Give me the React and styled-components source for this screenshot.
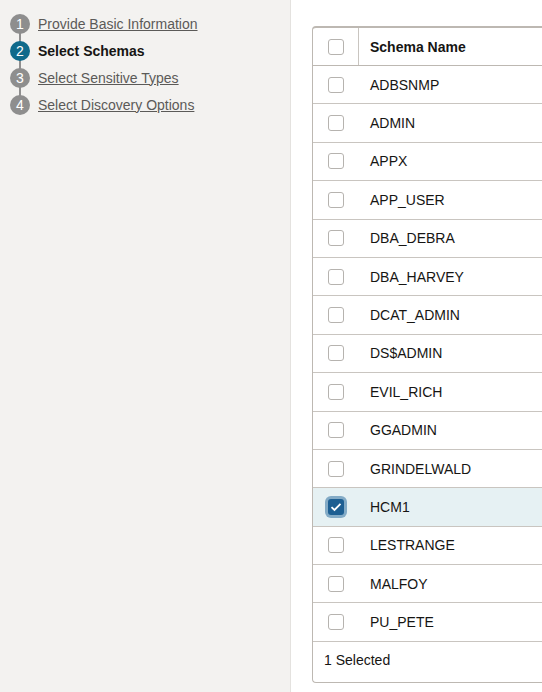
import React from "react";
import styled, { createGlobalStyle } from "styled-components";

const GlobalStyle = createGlobalStyle`
  html, body {
    margin: 0;
    padding: 0;
    background: #ffffff;
  }
  body {
    font-family: "Liberation Sans", Arial, sans-serif;
    color: #161513;
  }
`;

const Page = styled.div`
  display: flex;
  width: 542px;
  height: 692px;
  overflow: hidden;
`;

const Sidebar = styled.nav`
  width: 291px;
  flex-shrink: 0;
  background: #f3f2f0;
  border-right: 1px solid #e4e2df;
  padding-top: 10px;
  box-sizing: border-box;
`;

const StepList = styled.ol`
  list-style: none;
  margin: 0;
  padding: 0 0 0 10px;
`;

const Step = styled.li`
  position: relative;
  display: flex;
  align-items: center;
  height: 27px;
  gap: 8px;

  &:not(:last-child)::after {
    content: "";
    position: absolute;
    left: 9px;
    top: 17px;
    width: 2px;
    height: 20px;
    background: #8f8f8f;
  }
`;

const StepNumber = styled.span`
  position: relative;
  z-index: 1;
  width: 20px;
  height: 20px;
  border-radius: 50%;
  background: ${(p) => (p.$active ? "#0f6a8b" : "#8e8e8e")};
  color: #ffffff;
  font-size: 14px;
  display: flex;
  align-items: center;
  justify-content: center;
  flex-shrink: 0;
`;

const StepLabel = styled.a`
  font-size: 14px;
  color: ${(p) => (p.$active ? "#161513" : "#5b5a58")};
  font-weight: ${(p) => (p.$active ? 700 : 400)};
  text-decoration: ${(p) => (p.$active ? "none" : "underline")};
  cursor: pointer;
`;

const Main = styled.main`
  flex: 1;
  padding: 26px 0 0 21px;
  box-sizing: border-box;
  min-width: 0;
`;

const Table = styled.div`
  width: 300px;
  border: 1px solid #bdb8b2;
  border-top-width: 2px;
  border-right: none;
  border-radius: 4px 0 0 4px;
`;

const Row = styled.div`
  display: flex;
  align-items: center;
  height: 38.4px;
  box-sizing: border-box;
  border-bottom: 1px solid #c9c5c0;
  background: ${(p) => (p.$selected ? "#e6f1f3" : "transparent")};
`;

const HeaderRow = styled(Row)`
  height: 38px;
  border-bottom-color: #bdb8b2;
`;

const CheckCell = styled.div`
  width: 46px;
  align-self: stretch;
  display: flex;
  align-items: center;
  justify-content: center;
  border-right: ${(p) => (p.$divider ? "1px solid #c9c5c0" : "1px solid transparent")};
  box-sizing: border-box;
`;

const NameCell = styled.div`
  padding-left: 11px;
  font-size: 14px;
  font-weight: ${(p) => (p.$header ? 700 : 400)};
  color: #161513;
`;

const Box = styled.span`
  width: 16px;
  height: 16px;
  box-sizing: border-box;
  border-radius: 3px;
  border: 1px solid #b6b3af;
  background: #ffffff;
`;

const CheckedBox = styled.span`
  width: 16px;
  height: 16px;
  box-sizing: border-box;
  border-radius: 3px;
  background: #1d5f92;
  box-shadow: 0 0 0 3px #83abc6;
  display: flex;
  align-items: center;
  justify-content: center;
`;

const Footer = styled.div`
  height: 40px;
  display: flex;
  align-items: center;
  padding: 0 0 3px 11px;
  box-sizing: border-box;
  font-size: 14px;
  color: #161513;
`;

const steps = [
  "Provide Basic Information",
  "Select Schemas",
  "Select Sensitive Types",
  "Select Discovery Options",
];

const schemas = [
  "ADBSNMP",
  "ADMIN",
  "APPX",
  "APP_USER",
  "DBA_DEBRA",
  "DBA_HARVEY",
  "DCAT_ADMIN",
  "DS$ADMIN",
  "EVIL_RICH",
  "GGADMIN",
  "GRINDELWALD",
  "HCM1",
  "LESTRANGE",
  "MALFOY",
  "PU_PETE",
];

const selected = ["HCM1"];

const Check = ({ on }) =>
  on ? (
    <CheckedBox>
      <svg width="12" height="10" viewBox="0 0 12 10">
        <path d="M1.5 5.2 L4.5 8 L10.5 1.8" fill="none" stroke="#fff" strokeWidth="1.8" />
      </svg>
    </CheckedBox>
  ) : (
    <Box />
  );

export default function App() {
  return (
    <>
      <GlobalStyle />
      <Page>
        <Sidebar>
          <StepList>
            {steps.map((s, i) => (
              <Step key={s}>
                <StepNumber $active={i === 1}>{i + 1}</StepNumber>
                <StepLabel $active={i === 1}>{s}</StepLabel>
              </Step>
            ))}
          </StepList>
        </Sidebar>
        <Main>
          <Table>
            <HeaderRow>
              <CheckCell $divider>
                <Check on={false} />
              </CheckCell>
              <NameCell $header>Schema Name</NameCell>
            </HeaderRow>
            {schemas.map((name) => {
              const on = selected.includes(name);
              return (
                <Row key={name} $selected={on}>
                  <CheckCell>
                    <Check on={on} />
                  </CheckCell>
                  <NameCell>{name}</NameCell>
                </Row>
              );
            })}
            <Footer>{selected.length} Selected</Footer>
          </Table>
        </Main>
      </Page>
    </>
  );
}
